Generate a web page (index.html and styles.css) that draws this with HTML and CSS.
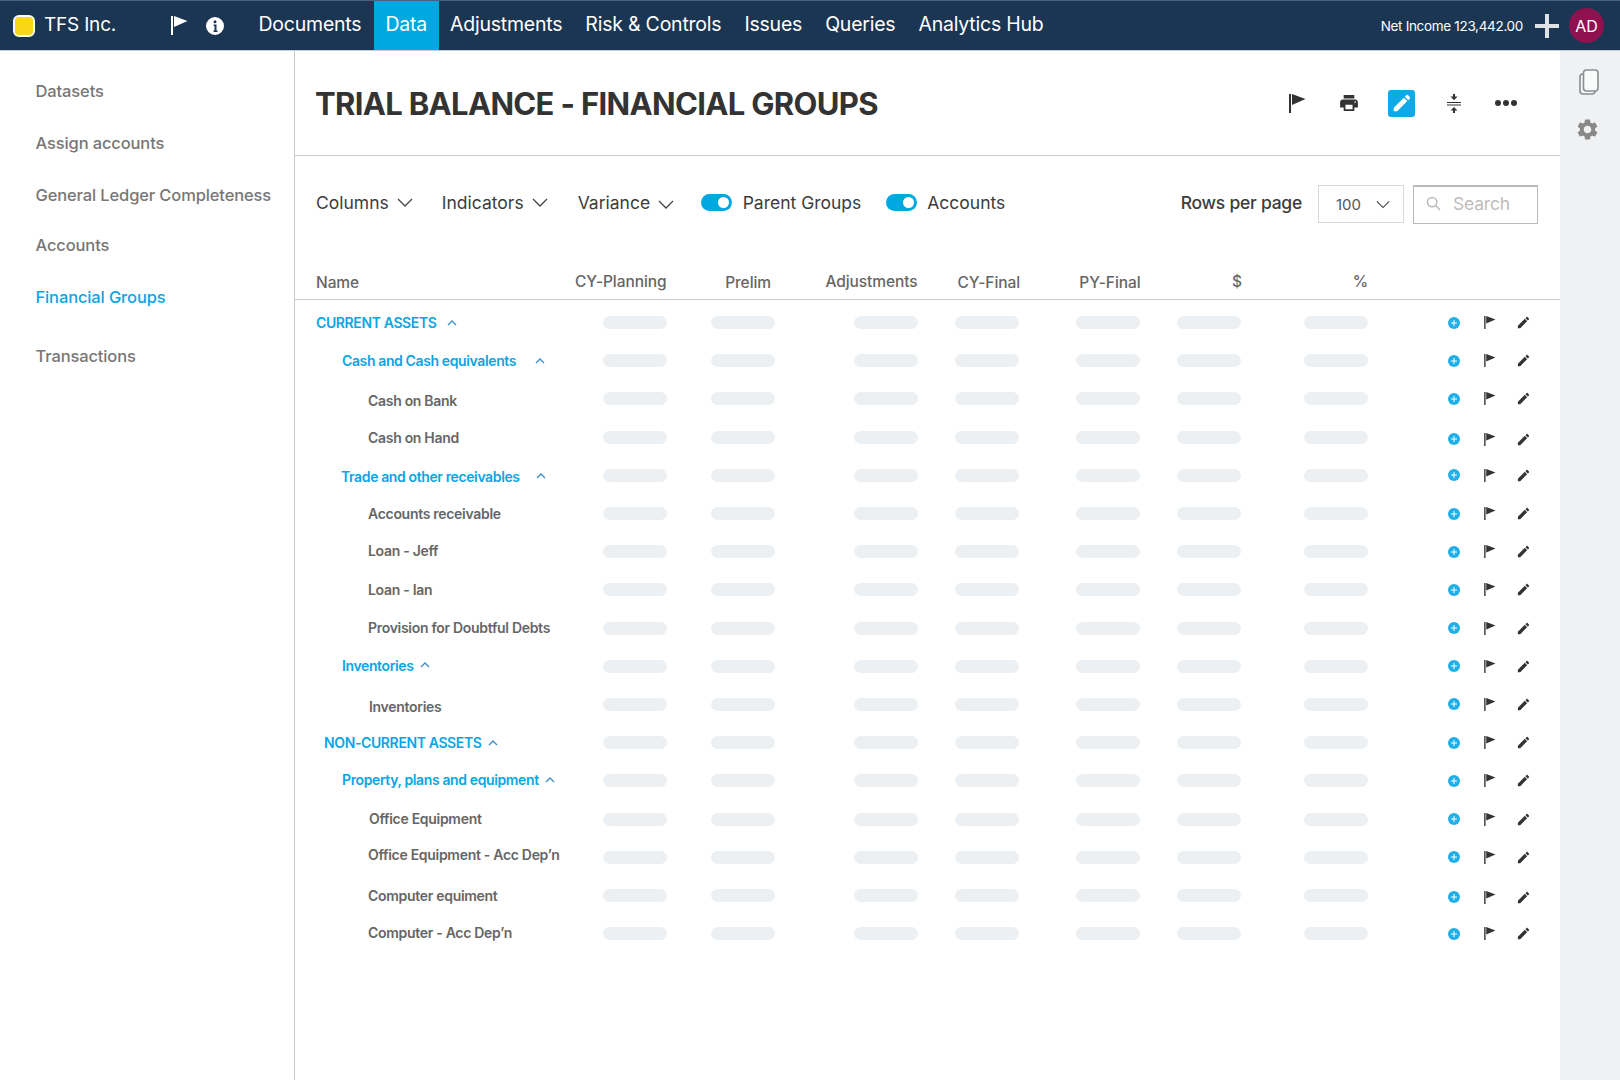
FILE: index.html
```html
<!DOCTYPE html>
<html lang="en">
<head>
<meta charset="utf-8">
<title>Trial Balance - Financial Groups</title>
<link rel="stylesheet" href="styles.css">
</head>
<body>
<svg class="defs" width="0" height="0" aria-hidden="true">
  <symbol id="flag" viewBox="0 0 17 19"><path d="M0 0h2v19H0zM3 0l13.500 5L3 11z"/></symbol>
  <symbol id="pencil" viewBox="0 0 24 24"><path d="M3 17.25V21h3.75L17.81 9.94l-3.75-3.75L3 17.25zM20.71 7.04c.39-.39.39-1.02 0-1.41l-2.34-2.34c-.39-.39-1.02-.39-1.41 0l-1.83 1.83 3.75 3.75 1.83-1.83z"/></symbol>
  <symbol id="plus" viewBox="0 0 12 12"><circle cx="6" cy="6" r="6" fill="#1fb0ea"/><path d="M5.5 3h1v2.5H9v1H6.5V9h-1V6.500H3v-1h2.500z" fill="#fff"/></symbol>
  <symbol id="chev-up" viewBox="0 0 10 6"><path d="M1 5l4-4 4 4" fill="none" stroke="#3d8fc9" stroke-width="1.300"/></symbol>
  <symbol id="chev-down" viewBox="0 0 16 9"><path d="M1 1l7 7 7-7" fill="none" stroke="#444" stroke-width="1.300"/></symbol>
</svg>

<header class="topbar">
  <div class="brand"><span class="logo"></span><span class="brand-name">TFS Inc.</span></div>
  <svg class="top-flag"><use href="#flag"/></svg>
  <svg class="top-info" viewBox="0 0 18 18"><path fill-rule="evenodd" d="M9 0a9 9 0 1 0 0 18A9 9 0 0 0 9 0zM7.600 7.400h2.900v6h1v1.500H7.500v-1.500h1v-4.500h-.9zM9 3.200a1.500 1.500 0 1 1 0 3 1.500 1.500 0 0 1 0-3z"/></svg>
  <nav class="nav">
    <a class="nav-item">Documents</a>
    <a class="nav-item active">Data</a>
    <a class="nav-item">Adjustments</a>
    <a class="nav-item">Risk &amp; Controls</a>
    <a class="nav-item">Issues</a>
    <a class="nav-item">Queries</a>
    <a class="nav-item">Analytics Hub</a>
  </nav>
  <div class="top-right">
    <span class="net">Net Income 123,442.00</span>
    <svg class="top-plus" viewBox="0 0 24 24"><path d="M10 0h4v10h10v4H14v10h-4V14H0v-4h10z"/></svg>
    <span class="avatar">AD</span>
  </div>
</header>

<div class="body">
  <aside class="sidebar">
    <a class="side-item">Datasets</a>
    <a class="side-item">Assign accounts</a>
    <a class="side-item">General Ledger Completeness</a>
    <a class="side-item tight">Accounts</a>
    <a class="side-item current">Financial Groups</a>
    <a class="side-item wide">Transactions</a>
  </aside>

  <main class="main">
    <div class="title-bar">
      <h1>TRIAL BALANCE - FINANCIAL GROUPS</h1>
      <div class="tools">
        <svg class="tool tool-flag"><use href="#flag"/></svg>
        <svg class="tool tool-print" viewBox="2 3 20 18"><path d="M19 8H5c-1.660 0-3 1.340-3 3v6h4v4h12v-4h4v-6c0-1.660-1.340-3-3-3zm-3 11H8v-5h8v5zm3-7c-.55 0-1-.45-1-1s.45-1 1-1 1 .45 1 1-.45 1-1 1zm-1-9H6v4h12V3z"/></svg>
        <span class="tool-edit"><svg viewBox="0 0 24 24"><use href="#pencil"/></svg></span>
        <svg class="tool tool-compress" viewBox="0 0 14 19"><path d="M6 0h2v2.500h2.500L7 6.200 3.500 2.500H6zM0 8h14v1H0zM0 10.500h14v1H0zM7 13l3.500 3.500H8V19H6v-2.500H3.500z"/></svg>
        <svg class="tool tool-dots" viewBox="0 0 22 6"><circle cx="3" cy="3" r="3"/><circle cx="11" cy="3" r="3"/><circle cx="19" cy="3" r="3"/></svg>
      </div>
    </div>

    <div class="toolbar">
      <div class="filter f-columns">Columns <svg class="chev"><use href="#chev-down"/></svg></div>
      <div class="filter f-indicators">Indicators <svg class="chev"><use href="#chev-down"/></svg></div>
      <div class="filter f-variance">Variance <svg class="chev low"><use href="#chev-down"/></svg></div>
      <div class="toggle-wrap t-parent"><span class="toggle"></span>Parent Groups</div>
      <div class="toggle-wrap t-accounts"><span class="toggle"></span>Accounts</div>
      <div class="rows-label">Rows per page</div>
      <div class="select">100 <svg class="chev"><use href="#chev-down"/></svg></div>
      <div class="search">
        <svg viewBox="0 0 16 16"><circle cx="6.500" cy="6.500" r="5" fill="none" stroke="#bbb" stroke-width="1.600"/><path d="M10.200 10.200L15 15" stroke="#bbb" stroke-width="1.600"/></svg>
        <span>Search</span>
      </div>
    </div>

    <div class="table">
      <div class="head">
        <span class="h-name">Name</span><span class="h-up">CY-Planning</span><span class="h-prelim">Prelim</span><span class="h-up">Adjustments</span><span class="h-final">CY-Final</span><span class="h-final">PY-Final</span><span class="h-final h-up">$</span><span class="h-up">%</span>
      </div>

      <div class="row"><div class="label group l0 gap-m">CURRENT ASSETS<svg class="up"><use href="#chev-up"/></svg></div><i></i><i></i><i></i><i></i><i></i><i></i><i></i><div class="acts"><svg class="a-plus"><use href="#plus"/></svg><svg class="a-flag"><use href="#flag"/></svg><svg class="a-pen"><use href="#pencil"/></svg></div></div>
      <div class="row"><div class="label group l1 gap-l">Cash and Cash equivalents<svg class="up"><use href="#chev-up"/></svg></div><i></i><i></i><i></i><i></i><i></i><i></i><i></i><div class="acts"><svg class="a-plus"><use href="#plus"/></svg><svg class="a-flag"><use href="#flag"/></svg><svg class="a-pen"><use href="#pencil"/></svg></div></div>
      <div class="row"><div class="label l2 down2">Cash on Bank</div><i></i><i></i><i></i><i></i><i></i><i></i><i></i><div class="acts"><svg class="a-plus"><use href="#plus"/></svg><svg class="a-flag"><use href="#flag"/></svg><svg class="a-pen"><use href="#pencil"/></svg></div></div>
      <div class="row"><div class="label l2">Cash on Hand</div><i></i><i></i><i></i><i></i><i></i><i></i><i></i><div class="acts low"><svg class="a-plus"><use href="#plus"/></svg><svg class="a-flag"><use href="#flag"/></svg><svg class="a-pen"><use href="#pencil"/></svg></div></div>
      <div class="row"><div class="label group l1b gap-l2 down1">Trade and other receivables<svg class="up"><use href="#chev-up"/></svg></div><i></i><i></i><i></i><i></i><i></i><i></i><i></i><div class="acts"><svg class="a-plus"><use href="#plus"/></svg><svg class="a-flag"><use href="#flag"/></svg><svg class="a-pen"><use href="#pencil"/></svg></div></div>
      <div class="row"><div class="label l2">Accounts receivable</div><i></i><i></i><i></i><i></i><i></i><i></i><i></i><div class="acts"><svg class="a-plus"><use href="#plus"/></svg><svg class="a-flag"><use href="#flag"/></svg><svg class="a-pen"><use href="#pencil"/></svg></div></div>
      <div class="row"><div class="label l2 up1">Loan - Jeff</div><i></i><i></i><i></i><i></i><i></i><i></i><i></i><div class="acts"><svg class="a-plus"><use href="#plus"/></svg><svg class="a-flag"><use href="#flag"/></svg><svg class="a-pen"><use href="#pencil"/></svg></div></div>
      <div class="row"><div class="label l2">Loan - Ian</div><i></i><i></i><i></i><i></i><i></i><i></i><i></i><div class="acts"><svg class="a-plus"><use href="#plus"/></svg><svg class="a-flag"><use href="#flag"/></svg><svg class="a-pen"><use href="#pencil"/></svg></div></div>
      <div class="row"><div class="label l2 up1">Provision for Doubtful Debts</div><i></i><i></i><i></i><i></i><i></i><i></i><i></i><div class="acts"><svg class="a-plus"><use href="#plus"/></svg><svg class="a-flag"><use href="#flag"/></svg><svg class="a-pen"><use href="#pencil"/></svg></div></div>
      <div class="row"><div class="label group l1 gap-s up1">Inventories<svg class="up"><use href="#chev-up"/></svg></div><i></i><i></i><i></i><i></i><i></i><i></i><i></i><div class="acts"><svg class="a-plus"><use href="#plus"/></svg><svg class="a-flag"><use href="#flag"/></svg><svg class="a-pen"><use href="#pencil"/></svg></div></div>
      <div class="row"><div class="label l2b down2">Inventories</div><i></i><i></i><i></i><i></i><i></i><i></i><i></i><div class="acts"><svg class="a-plus"><use href="#plus"/></svg><svg class="a-flag"><use href="#flag"/></svg><svg class="a-pen"><use href="#pencil"/></svg></div></div>
      <div class="row"><div class="label group l0b gap-s">NON-CURRENT ASSETS<svg class="up"><use href="#chev-up"/></svg></div><i></i><i></i><i></i><i></i><i></i><i></i><i></i><div class="acts"><svg class="a-plus"><use href="#plus"/></svg><svg class="a-flag"><use href="#flag"/></svg><svg class="a-pen"><use href="#pencil"/></svg></div></div>
      <div class="row"><div class="label group l1 gap-s up1">Property, plans and equipment<svg class="up"><use href="#chev-up"/></svg></div><i></i><i></i><i></i><i></i><i></i><i></i><i></i><div class="acts"><svg class="a-plus"><use href="#plus"/></svg><svg class="a-flag"><use href="#flag"/></svg><svg class="a-pen"><use href="#pencil"/></svg></div></div>
      <div class="row"><div class="label l2b up1">Office Equipment</div><i></i><i></i><i></i><i></i><i></i><i></i><i></i><div class="acts"><svg class="a-plus"><use href="#plus"/></svg><svg class="a-flag"><use href="#flag"/></svg><svg class="a-pen"><use href="#pencil"/></svg></div></div>
      <div class="row"><div class="label l2 raised">Office Equipment - Acc Dep’n</div><i></i><i></i><i></i><i></i><i></i><i></i><i></i><div class="acts"><svg class="a-plus"><use href="#plus"/></svg><svg class="a-flag"><use href="#flag"/></svg><svg class="a-pen"><use href="#pencil"/></svg></div></div>
      <div class="row"><div class="label l2">Computer equiment</div><i></i><i></i><i></i><i></i><i></i><i></i><i></i><div class="acts low"><svg class="a-plus"><use href="#plus"/></svg><svg class="a-flag"><use href="#flag"/></svg><svg class="a-pen"><use href="#pencil"/></svg></div></div>
      <div class="row"><div class="label l2 up1">Computer - Acc Dep’n</div><i></i><i></i><i></i><i></i><i></i><i></i><i></i><div class="acts"><svg class="a-plus"><use href="#plus"/></svg><svg class="a-flag"><use href="#flag"/></svg><svg class="a-pen"><use href="#pencil"/></svg></div></div>
    </div>
  </main>

  <aside class="rail">
    <svg class="rail-copy" viewBox="0 0 20 26"><rect x="1" y="5" width="15" height="20" rx="3" fill="#f4f5f6" stroke="#8a8e92" stroke-width="1.600"/><rect x="4.500" y="1" width="14.500" height="21" rx="3" fill="#f9fafa" stroke="#8a8e92" stroke-width="1.600"/></svg>
    <svg class="rail-gear" viewBox="2.500 2 19 20"><path d="M19.140 12.940c.04-.3.060-.61.060-.94 0-.32-.02-.64-.07-.94l2.030-1.580c.18-.14.23-.41.12-.61l-1.920-3.320c-.12-.22-.37-.29-.59-.22l-2.390.96c-.5-.38-1.030-.7-1.620-.94l-.36-2.540c-.04-.24-.24-.41-.48-.41h-3.840c-.24 0-.43.17-.47.41l-.36 2.540c-.59.24-1.130.57-1.620.94l-2.390-.96c-.22-.08-.47 0-.59.22L2.740 8.870c-.12.21-.08.47.12.61l2.030 1.580c-.05.3-.09.63-.09.94s.02.64.07.94l-2.030 1.580c-.18.14-.23.41-.12.61l1.920 3.320c.12.22.37.29.59.22l2.390-.96c.5.38 1.030.7 1.620.94l.36 2.540c.05.24.24.41.48.41h3.840c.24 0 .44-.17.47-.41l.36-2.540c.59-.24 1.130-.56 1.620-.94l2.390.96c.22.08.47 0 .59-.22l1.920-3.320c.12-.22.07-.47-.12-.61l-2.010-1.580zM12 15.600c-1.980 0-3.600-1.620-3.600-3.600s1.620-3.600 3.600-3.600 3.600 1.620 3.600 3.600-1.620 3.600-3.600 3.600z"/></svg>
  </aside>
</div>
</body>
</html>
```

FILE: styles.css
```css
* { box-sizing: border-box; }
html { height: 1080px; overflow: hidden; }
body {
  margin: 0; width: 1620px; height: 1080px; overflow: hidden; background: #fff;
  font-family: "Inter", "Liberation Sans", sans-serif; color: #333;
  display: flex; flex-direction: column;
}
.defs { display: block; height: 0; }

/* Top bar */
.topbar {
  height: 51px; flex: none; display: flex; align-items: center;
  background: #1b3653; color: #fff; border-top: 1px solid #49627c; border-bottom: 1px solid #c9ced3;
  padding-left: 13px;
}
.brand { display: flex; align-items: center; width: 158px; flex: none; }
.logo { width: 22px; height: 22px; background: #f8d714; border: 2px solid #fff; border-radius: 6px; flex: none; }
.brand-name { margin-left: 9px; font-size: 19px; letter-spacing: -.2px; padding-bottom: 2px; }
.top-flag { width: 17px; height: 19px; fill: #fff; flex: none; }
.top-info { width: 18px; height: 18px; fill: #fff; margin-left: 18px; flex: none; }
.nav { display: flex; align-self: stretch; margin-left: 23px; }
.nav-item { display: flex; align-items: center; padding: 0 11.500px 3px; font-size: 19.500px; letter-spacing: -.22px; }
.nav-item.active { background: #00a8e1; margin-left: 1px; }
.top-right { margin-left: auto; display: flex; align-items: center; padding-right: 16px; }
.net { font-size: 13.500px; letter-spacing: -.32px; }
.top-plus { width: 24px; height: 24px; fill: #dfe3e8; margin-left: 12px; }
.avatar {
  width: 35px; height: 35px; margin-left: 10px; border-radius: 50%; background: #8f1150;
  display: flex; align-items: center; justify-content: center; font-size: 16px;
}

/* Layout */
.body { flex: 1; display: flex; min-height: 0; }
.sidebar {
  width: 295px; flex: none; border-right: 1px solid #c9c9c9;
  display: flex; flex-direction: column; padding: 30px 0 0 35.500px;
}
.side-item { font-size: 16.500px; font-weight: 500; color: #777; line-height: 20px; margin-bottom: 32px; letter-spacing: -.13px; }
.side-item.tight { margin-top: -2px; }
.side-item.current { color: #0aa5e4; }
.side-item.wide { margin-top: 7px; }
.main { flex: 1; min-width: 0; display: flex; flex-direction: column; }
.rail { width: 60px; flex: none; background: #f0f1f3; display: flex; flex-direction: column; align-items: center; padding: 18px 3px 0 0; }
.rail-copy { width: 20px; height: 26px; }
.rail-gear { width: 21px; height: 21px; fill: #888; margin: 24px 2px 0 0; }

/* Title */
.title-bar {
  height: 105px; flex: none; border-bottom: 1px solid #c9c9c9;
  display: flex; align-items: center; justify-content: space-between; padding: 1px 0 0 20px;
}
h1 { margin: 0; font-size: 31px; font-weight: 650; color: #333; letter-spacing: -.67px; }
.tools { display: flex; align-items: center; padding-right: 43px; padding-bottom: 1px; }
.tool { fill: #333; flex: none; }
.tool-flag { width: 17px; height: 19px; margin-right: -1px; }
.tool-print { width: 18px; height: 16px; margin-left: 35px; }
.tool-edit { width: 27px; height: 27px; margin-left: 30px; background: #0ea9e6; border-radius: 3px; display: flex; align-items: center; justify-content: center; fill: #fff; }
.tool-edit svg { width: 22px; height: 22px; }
.tool-compress { width: 14px; height: 19px; margin-left: 32px; }
.tool-dots { width: 22px; height: 6px; margin-left: 34px; }

/* Toolbar */
.toolbar { height: 96px; flex: none; display: flex; align-items: center; padding: 0 22px 0 21px; font-size: 17.500px; color: #3c3c3c; }
.filter { display: flex; align-items: center; padding-bottom: 4px; }
.chev { width: 16px; height: 9px; margin-left: 8px; }
.chev.low { margin-top: 4px; }
.f-indicators { margin-left: 29px; }
.f-variance { margin-left: 30px; }
.toggle-wrap { display: flex; align-items: center; padding-bottom: 4px; }
.t-parent { margin-left: 27px; }
.t-accounts { margin-left: 24.500px; }
.toggle { width: 31px; height: 17px; background: #00a8e1; border-radius: 9px; margin-right: 10.500px; position: relative; }
.toggle::after { content: ""; position: absolute; right: 3px; top: 3px; width: 11px; height: 11px; border-radius: 50%; background: #fff; }
.rows-label { margin-left: auto; font-weight: 500; padding-bottom: 4px; letter-spacing: -.25px; }
.select {
  width: 86px; height: 38px; margin-left: 16px; border: 1px solid #d6d8da;
  display: flex; align-items: center; justify-content: space-between; padding: 0 13px 0 17px; font-size: 15px; color: #555;
}
.select .chev { width: 14px; }
.search {
  width: 125px; height: 39px; margin-left: 9px; border: 1px solid #b9b9b9; border-top-width: 2px;
  display: flex; align-items: center; padding: 0 0 2px 12px; color: #bdbdbd; letter-spacing: -.2px;
}
.search svg { width: 15px; height: 15px; flex: none; }
.search span { margin-left: 12px; }

/* Table */
.table { flex: 1; display: flex; flex-direction: column; }
.head, .row {
  display: grid; padding-left: 21px;
  grid-template-columns: 286.500px 64px 108.500px 142.500px 101.500px 120.500px 101.500px 127px 1fr;
  justify-items: end; align-items: center;
}
.head { height: 48px; border-bottom: 1px solid #c9c9c9; font-size: 15.500px; font-weight: 500; color: #666; letter-spacing: -.08px; align-items: end; padding-bottom: 7px; }
.head span { white-space: nowrap; }
.head .h-name { justify-self: start; }
.head .h-prelim { margin-right: 4px; }
.head .h-final { margin-right: -1px; }
.head .h-up { padding-bottom: 1px; }
.row { height: 38.200px; }
.head + .row { margin-top: 3.500px; }
.row i { display: block; width: 64px; height: 13px; border-radius: 7px; background: #edf0f3; }
.label { justify-self: start; display: flex; align-items: center; font-size: 14px; font-weight: 600; color: #666; letter-spacing: -.3px; white-space: nowrap; }
.label.group { color: #0aa5e4; letter-spacing: -.38px; }
.l0 { padding-left: 0; }
.l0b { padding-left: 8px; }
.l1 { padding-left: 26px; }
.l1b { padding-left: 25px; }
.l2 { padding-left: 52px; }
.l2b { padding-left: 53px; }
.raised { padding-bottom: 6px; }
.up1 { padding-bottom: 2px; }
.down1 { padding-top: 2px; }
.down2 { padding-top: 4px; }
.up { width: 10px; height: 6px; flex: none; }
.gap-s .up { margin-left: 6px; }
.gap-m .up { margin-left: 10px; }
.gap-l .up { margin-left: 19px; }
.gap-l2 .up { margin-left: 16px; }
.acts { justify-self: stretch; display: flex; align-items: center; padding-left: 80px; }
.acts.low { padding-top: 4px; }
.a-plus { width: 12px; height: 12px; flex: none; }
.a-flag { width: 12px; height: 13px; margin-left: 24px; fill: #333; flex: none; }
.a-pen { width: 15px; height: 15px; margin-left: 20px; fill: #333; flex: none; }
```
